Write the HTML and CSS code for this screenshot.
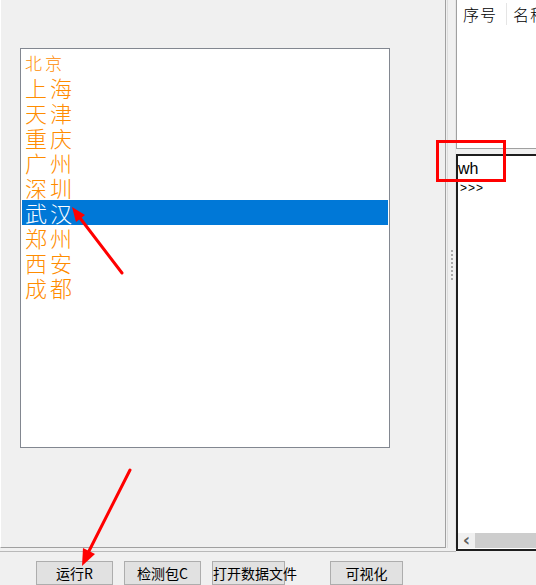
FILE: index.html
```html
<!DOCTYPE html>
<html lang="zh">
<head>
  <meta charset="UTF-8">
  <title>城市列表</title>
  <link rel="stylesheet" href="styles.css">
</head>
<body>
  <div class="main">
    <div class="left-side">
      <div class="left-pane">
        <ul class="city-list">
          <li class="small">北京</li>
          <li>上海</li>
          <li>天津</li>
          <li>重庆</li>
          <li>广州</li>
          <li>深圳</li>
          <li class="selected">武汉</li>
          <li>郑州</li>
          <li>西安</li>
          <li>成都</li>
        </ul>
      </div>
      <div class="splitter">
        <div class="grip"></div>
      </div>
    </div>

    <div class="right-side">
      <div class="table-pane">
        <div class="table-head">
          <div class="cell first">序号</div>
          <div class="cell">名称</div>
        </div>
      </div>
      <div class="console">
        <div class="console-text">
          <div class="input-line">wh</div>
          <div class="prompt">&gt;&gt;&gt;</div>
        </div>
        <div class="hscroll">
          <span class="arrow-btn">&lsaquo;</span>
          <span class="thumb"></span>
        </div>
      </div>
    </div>
  </div>

  <div class="toolbar">
    <button class="btn">运行R</button>
    <button class="btn">检测包C</button>
    <button class="btn narrow">打开数据文件</button>
    <button class="btn narrow spaced">可视化</button>
  </div>

  <!-- annotation marks drawn over the window -->
  <svg class="marks" width="536" height="585" viewBox="0 0 536 585">
    <line x1="122" y1="273" x2="80" y2="218" stroke="#ff0000" stroke-width="3" stroke-linecap="round"/>
    <polygon points="72,207 85,215 76,222" fill="#ff0000"/>
    <line x1="130" y1="470" x2="89" y2="551" stroke="#ff0000" stroke-width="3" stroke-linecap="round"/>
    <polygon points="82,566 95,554 83,548" fill="#ff0000"/>
    <rect x="437.5" y="141.5" width="67" height="39" fill="none" stroke="#ff0000" stroke-width="3"/>
  </svg>
</body>
</html>
```

FILE: styles.css
```css
body {
  margin: 0;
  width: 536px;
  height: 585px;
  overflow: hidden;
  background-color: #f0f0f0;
  font-family: "Noto Sans CJK SC", "Liberation Sans", sans-serif;
  position: relative;
}

.main {
  display: flex;
  height: 552px;
}

.left-side {
  display: flex;
  width: 456px;
  height: 552px;
  box-sizing: border-box;
  border-bottom: 1px solid #b9b9b9;
}

.left-pane {
  width: 446px;
  height: 548px;
  box-sizing: border-box;
  border-right: 1px solid #a0a0a0;
  border-bottom: 1px solid #a0a0a0;
  border-left: 1px solid #ffffff;
  padding: 48px 0 0 19px;
}

.city-list {
  list-style: none;
  margin: 0;
  padding: 1px;
  width: 370px;
  height: 400px;
  box-sizing: border-box;
  background-color: white;
  border: 1px solid #828790;
}

.city-list li {
  height: 25px;
  line-height: 25px;
  padding-left: 3px;
  font-size: 22px;
  font-weight: 300;
  letter-spacing: 3px;
  color: #ff8c00;
  white-space: nowrap;
}

.city-list li.small {
  font-size: 17px;
  letter-spacing: 3px;
}

.city-list li.selected {
  background-color: #0078d7;
  color: white;
}

.splitter {
  flex: 1;
  border-left: 1px solid #dcdcdc;
  margin-left: 1px;
  display: flex;
  justify-content: center;
  padding-top: 250px;
  box-sizing: border-box;
  height: 548px;
  border-right: 1px solid #e6e6e6;
}

.grip {
  width: 2px;
  height: 30px;
  background-image: repeating-linear-gradient(#a8a8a8 0 2px, transparent 2px 4px);
}

.right-side {
  width: 80px;
  display: flex;
  flex-direction: column;
}

.table-pane {
  height: 149px;
  box-sizing: border-box;
  background-color: white;
  border-left: 1px solid #a0a0a0;
  border-bottom: 1px solid #a0a0a0;
}

.table-head {
  display: flex;
  height: 28px;
}

.table-head .cell {
  flex-shrink: 0;
  font-size: 16px;
  font-weight: 300;
  letter-spacing: 1px;
  line-height: 28px;
  padding-left: 6px;
  white-space: nowrap;
  color: #000;
}

.table-head .cell.first {
  width: 50px;
  box-sizing: border-box;
  padding-left: 6px;
  border-right: 1px solid #e5e5e5;
  margin: 3px 0;
  line-height: 22px;
}

.console {
  margin-top: 5px;
  height: 397px;
  box-sizing: border-box;
  background-color: white;
  border-left: 2px solid #1e1e1e;
  border-top: 2px solid #1e1e1e;
  border-bottom: 2px solid #1e1e1e;
  display: flex;
  flex-direction: column;
}

.console-text {
  flex: 1;
  padding: 3px 0 0 0;
  font-family: "Liberation Sans", sans-serif;
  color: #000;
}

.input-line {
  font-size: 16px;
  line-height: 20px;
  height: 22px;
}

.prompt {
  font-size: 12px;
  line-height: 14px;
  padding-left: 2px;
  letter-spacing: 1px;
}

.hscroll {
  display: flex;
  height: 15px;
  margin-bottom: 1px;
  background-color: #f0f0f0;
}

.arrow-btn {
  width: 17px;
  text-align: center;
  font-size: 18px;
  line-height: 13px;
  font-weight: bold;
  color: #606060;
  font-family: "DejaVu Sans", sans-serif;
}

.thumb {
  flex: 1;
  background-color: #cdcdcd;
}

.toolbar {
  display: flex;
  padding: 9px 0 0 36px;
  gap: 11px;
}

.btn {
  width: 77px;
  height: 24px;
  padding: 0;
  background-color: #e1e1e1;
  border: 1px solid #adadad;
  font-family: "Noto Sans CJK SC", sans-serif;
  font-size: 14px;
  color: #000;
  white-space: nowrap;
}

.btn.narrow {
  width: 73px;
}

.btn.spaced {
  margin-left: 34px;
}

.marks {
  position: absolute;
  top: 0;
  left: 0;
  pointer-events: none;
}
```
